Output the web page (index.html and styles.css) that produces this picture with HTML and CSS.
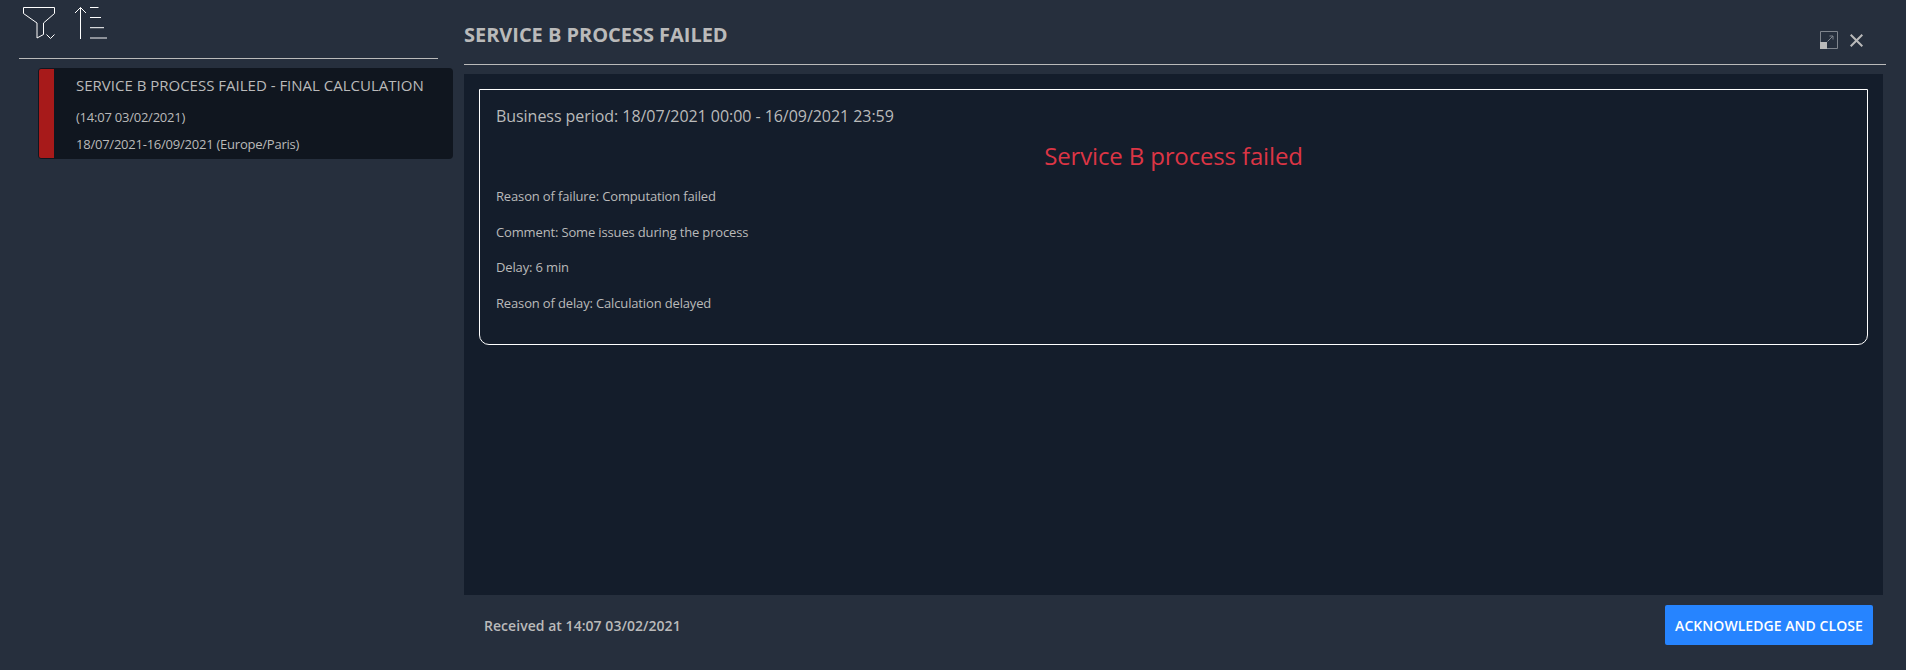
FILE: index.html
```html
<!DOCTYPE html>
<html lang="en">
<head>
<meta charset="utf-8">
<title>Feed</title>
<link rel="stylesheet" href="styles.css">
</head>
<body>
<div class="app">
  <aside class="feed">
    <div class="toolbar">
      <svg class="icon" width="34" height="34" viewBox="0 0 34 34" fill="none" stroke="#fff" stroke-width="1"><path d="M1.500 2.500H32.500V8.500L21.500 18"/><path d="M1.500 2.500V8.500L15 18V33L21.500 29.500V18"/><path d="M24.500 29.500L28.500 33.500L32.500 29.500"/></svg>
      <svg class="icon" width="34" height="34" viewBox="0 0 34 34" fill="none" stroke="#fff" stroke-width="1"><path d="M6.500 34V2.500M1 8L6.500 2.500L12 8M16 2.500H24.500M16 12.500H27M16 22.700H30"/><path d="M16 33H33" stroke-opacity=".95"/></svg>
    </div>
    <article class="card">
      <div class="severity"></div>
      <div class="card-body">
        <h2 class="card-title">SERVICE B PROCESS FAILED - FINAL CALCULATION</h2>
        <p class="card-line">(14:07 03/02/2021)</p>
        <p class="card-line">18/07/2021-16/09/2021 (Europe/Paris)</p>
      </div>
    </article>
  </aside>
  <main class="detail">
    <header class="detail-header">
      <h1 class="detail-title">SERVICE B PROCESS FAILED</h1>
      <div class="actions">
        <svg width="18" height="18" viewBox="0 0 18 18" fill="none" stroke="#7f858d"><path d="M.5.5H17.500V17.500H.5Z"/><path d="M7.500 10.500L13 5M9.500 5H13V8.500"/><path d="M0 11H7V18H0Z" fill="#bababa" stroke="none"/></svg>
        <svg width="13" height="13" viewBox="0 0 13 13" fill="none" stroke="#bababa" stroke-width="2"><path d="M.7.7L12.300 12.300M12.300.7L.7 12.300"/></svg>
      </div>
    </header>
    <section class="content">
      <div class="box">
        <p class="period">Business period: 18/07/2021 00:00 - 16/09/2021 23:59</p>
        <h2 class="alert">Service B process failed</h2>
        <p class="info">Reason of failure: Computation failed</p>
        <p class="info">Comment: Some issues during the process</p>
        <p class="info">Delay: 6 min</p>
        <p class="info">Reason of delay: Calculation delayed</p>
      </div>
    </section>
    <footer class="detail-footer">
      <span class="received">Received at 14:07 03/02/2021</span>
      <button class="ack">ACKNOWLEDGE AND CLOSE</button>
    </footer>
  </main>
</div>
</body>
</html>
```
FILE: styles.css
```css
* { box-sizing: border-box; }
body {
  margin: 0;
  background: #262f3d;
  color: #bababa;
  font-family: "Open Sans", "Noto Sans", sans-serif;
}
h1, h2, p { margin: 0; font-weight: 400; }
svg { display: block; }
.app { display: flex; height: 670px; overflow: hidden; }
.feed { width: 464px; padding-left: 19px; }
.toolbar {
  display: flex;
  gap: 18px;
  width: 419px;
  height: 59px;
  padding: 5px 0 0 3px;
  border-bottom: 1px solid #bababa;
}
.card {
  display: flex;
  width: 415px;
  height: 91px;
  margin: 9px 0 0 19px;
  padding: 1px;
  border-radius: 4px;
  background: #10161f;
}
.severity { width: 15px; background: #a71a1a; border-radius: 2px 0 0 2px; }
.card-body { padding: 4px 0 0 22px; white-space: nowrap; }
.card-title { font-size: 15px; line-height: 24px; margin-bottom: 7px; }
.card-line { font-size: 13px; line-height: 27px; letter-spacing: -0.23px; }
.detail { width: 1422px; }
.detail-header {
  display: flex;
  justify-content: space-between;
  height: 65px;
  border-bottom: 1px solid #bababa;
}
.detail-title { font-size: 20px; line-height: 30px; font-weight: 700; letter-spacing: -0.03px; padding-top: 20px; }
.actions { display: flex; align-items: center; gap: 12px; height: 18px; margin: 31px 23px 0 0; }
.content { width: 1419px; height: 521px; margin-top: 9px; padding: 15px; background: #141d2b; }
.box { height: 256px; padding: 14px 16px; border: 1px solid #fff; border-radius: 0 0 10px 10px; }
.period { font-size: 16px; line-height: 24px; letter-spacing: -0.05px; }
.alert { font-size: 24px; line-height: 36px; letter-spacing: -0.15px; color: #dc3545; text-align: center; margin: 10px 0 12px; }
.info { font-size: 13px; line-height: 20px; letter-spacing: -0.15px; margin-bottom: 15.6px; }
.detail-footer {
  display: flex;
  justify-content: space-between;
  align-items: center;
  height: 40px;
  margin-top: 10px;
  padding: 0 13px 0 20px;
}
.received { font-size: 14px; font-weight: 600; letter-spacing: 0.04px; }
.ack {
  width: 208px;
  height: 40px;
  padding: 0;
  border: 0;
  border-radius: 2px;
  background: #2684ff;
  color: #fff;
  font: 600 14px "Open Sans", sans-serif;
  letter-spacing: 0.05px;
}
```
